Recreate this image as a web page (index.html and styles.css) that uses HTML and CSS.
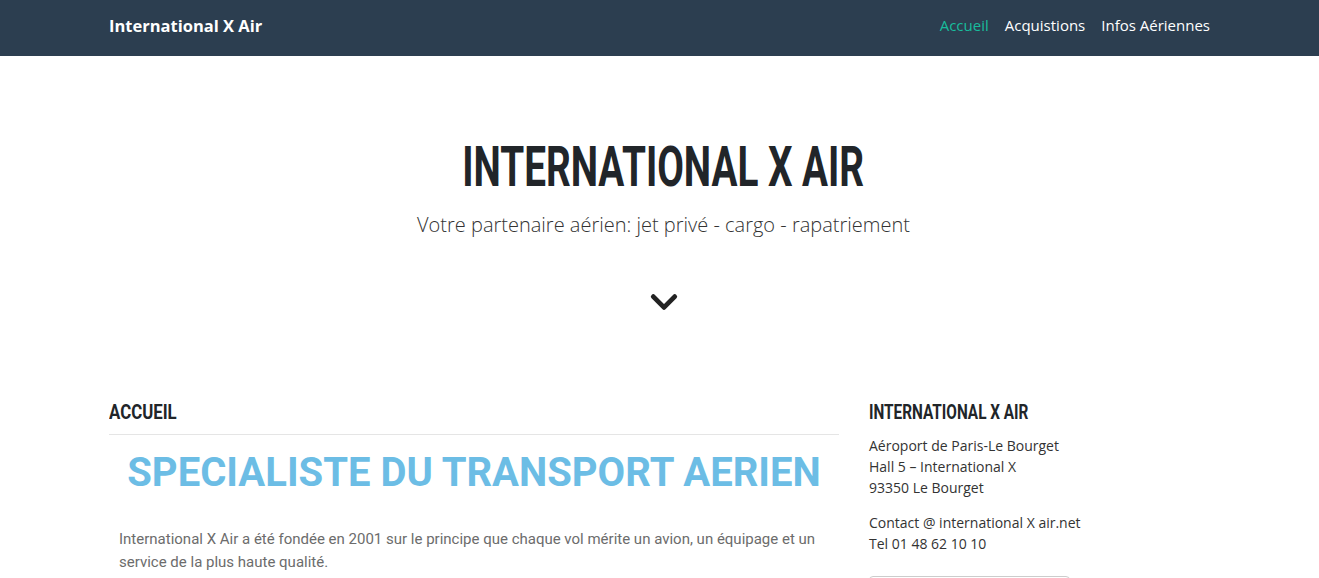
FILE: index.html
```html
<!DOCTYPE html>
<html lang="fr">
<head>
    <meta charset="UTF-8">
    <meta name="viewport" content="width=device-width, initial-scale=1.0">
    <title>International X Air</title>
    <link rel="stylesheet" href="styles.css">
</head>
<body>
    <nav class="navbar">
        <div class="container nav-inner">
            <a class="brand" href="#">International X Air</a>
            <ul class="nav-links">
                <li><a class="active" href="#">Accueil</a></li>
                <li><a href="#">Acquistions</a></li>
                <li><a href="#">Infos Aériennes</a></li>
            </ul>
        </div>
    </nav>

    <header class="hero">
        <h1 class="hero-title"><span>INTERNATIONAL X AIR</span></h1>
        <p class="hero-subtitle">Votre partenaire aérien: jet privé - cargo - rapatriement</p>
        <a class="hero-down" href="#content">
            <svg viewBox="0 0 28 20">
                <polyline points="4 5 14 15 24 5"></polyline>
            </svg>
        </a>
    </header>

    <div class="container content" id="content">
        <main class="main-col">
            <h2 class="section-title"><span>ACCUEIL</span></h2>
            <h3 class="headline">SPECIALISTE DU TRANSPORT AERIEN</h3>
            <p class="intro">International X Air a été fondée en 2001 sur le principe que chaque vol mérite un avion, un équipage et un service de la plus haute qualité.</p>
        </main>
        <aside class="sidebar">
            <h2 class="side-title"><span>INTERNATIONAL X AIR</span></h2>
            <p class="side-text">Aéroport de Paris-Le Bourget<br>Hall 5 – International X<br>93350 Le Bourget</p>
            <p class="side-text">Contact @ international X air.net<br>Tel 01 48 62 10 10</p>
            <div class="side-box"></div>
        </aside>
    </div>
</body>
</html>
```

FILE: styles.css
```css
body {
    margin: 0;
    font-family: "Open Sans", "Noto Sans", sans-serif;
    color: #212529;
    background-color: white;
}

.container {
    width: 1101px;
    margin: 0 auto;
}

/* barre de navigation */
.navbar {
    background-color: #2c3e50;
    height: 56px;
}

.nav-inner {
    display: flex;
    align-items: center;
    justify-content: space-between;
    height: 100%;
}

.brand {
    color: white;
    font-weight: bold;
    font-size: 16.5px;
    text-decoration: none;
    margin-top: -5px;
}

.nav-links {
    display: flex;
    list-style: none;
    margin: 0;
    padding: 0;
    gap: 16px;
    margin-top: -6px;
}

.nav-links a {
    color: white;
    font-size: 15px;
    text-decoration: none;
}

.nav-links a.active {
    color: #18bc9c;
}

/* en-tete */
.hero {
    text-align: center;
    padding: 83px 0 0 8px;
    height: 288px;
    box-sizing: border-box;
}

.hero-title {
    font-family: Roboto, sans-serif;
    font-weight: bold;
    font-size: 56px;
    line-height: 1;
    margin: 0;
    color: #212529;
}

.hero-title span {
    display: inline-block;
    transform: scaleX(0.69);
}

.hero-subtitle {
    font-size: 20px;
    font-weight: 300;
    color: #333;
    margin: 16px 0 0;
}

.hero-down {
    display: inline-block;
    margin-top: 53px;
}

.hero-down svg {
    width: 30px;
    height: 22px;
    fill: none;
    stroke: #222;
    stroke-width: 4.5px;
    stroke-linecap: round;
    stroke-linejoin: round;
}

/* contenu */
.content {
    display: flex;
    gap: 30px;
    padding-top: 55px;
}

.main-col {
    width: 730px;
}

.sidebar {
    flex: 1;
}

.section-title,
.side-title {
    font-family: Roboto, sans-serif;
    font-weight: bold;
    font-size: 21px;
    margin: 0;
    line-height: 26px;
    color: #212529;
}

.section-title span,
.side-title span {
    display: inline-block;
    transform: scaleX(0.73);
    transform-origin: left center;
}

.section-title span {
    transform: scaleX(0.8);
}

.section-title {
    padding-bottom: 9px;
    border-bottom: 1px solid #e5e5e5;
}

.headline {
    font-family: Roboto, sans-serif;
    font-weight: bold;
    font-size: 40px;
    color: #6cbde5;
    text-align: center;
    margin: 14px 0 0;
    line-height: 48px;
}

.intro {
    font-family: Roboto, sans-serif;
    font-size: 15px;
    line-height: 23px;
    color: #6c6c6c;
    margin: 31px 0 0;
    padding: 0 10px;
}

.side-text {
    font-size: 14px;
    color: #333;
    line-height: 21px;
    margin: 10px 0 14px;
}

.side-box {
    width: 199px;
    height: 40px;
    border: 1px solid #ccc;
    border-radius: 4px;
    margin-top: 22px;
}
```
